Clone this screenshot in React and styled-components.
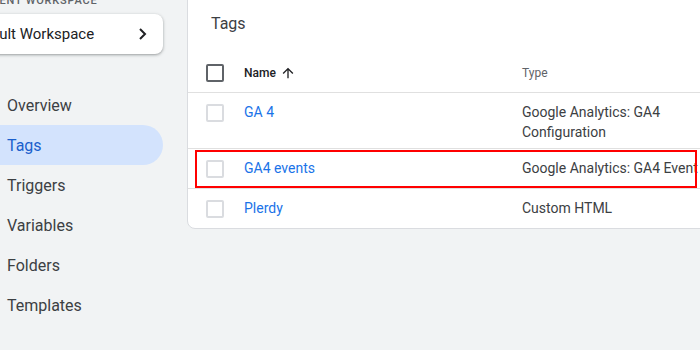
import React from "react";
import styled, { createGlobalStyle } from "styled-components";

const GlobalStyle = createGlobalStyle`
  html, body { margin: 0; padding: 0; }
  body {
    background: #f1f3f4;
    overflow: hidden;
    font-family: Roboto, "Liberation Sans", Arial, sans-serif;
    width: 700px;
    height: 350px;
  }
  * { box-sizing: border-box; }
`;

const Page = styled.div`
  display: flex;
  align-items: flex-start;
  margin: -14px 0 0 -48px;
  width: 820px;
`;

const Sidebar = styled.aside`
  width: 235px;
  flex-shrink: 0;
  display: flex;
  flex-direction: column;
`;

const WorkspaceLabel = styled.div`
  padding: 7px 0 0 16px;
  height: 23px;
  font-size: 11px;
  line-height: 16px;
  font-weight: 500;
  letter-spacing: 0.8px;
  color: #5f6368;
  text-transform: uppercase;
  white-space: nowrap;
`;

const WorkspaceCard = styled.button`
  margin: 5px 0 0 4px;
  width: 207px;
  height: 40px;
  display: flex;
  align-items: center;
  justify-content: space-between;
  padding: 0 13px 0 12px;
  background: #fff;
  border: none;
  border-radius: 8px;
  box-shadow: 0 1px 2px rgba(60, 64, 67, 0.3), 0 1px 3px 1px rgba(60, 64, 67, 0.15);
  font-family: inherit;
  font-size: 15px;
  color: #202124;
  cursor: pointer;
`;

const Nav = styled.nav`
  margin-top: 31px;
  display: flex;
  flex-direction: column;
`;

const NavItem = styled.a`
  display: flex;
  align-items: center;
  width: 211px;
  height: 40px;
  padding-left: 55px;
  border-radius: 0 20px 20px 0;
  font-size: 16px;
  font-weight: 400;
  color: ${(p) => (p.$active ? "#1a5fcc" : "#3c4043")};
  background: ${(p) => (p.$active ? "#d3e3fd" : "transparent")};
  text-decoration: none;
`;

const Main = styled.main`
  flex: 1;
`;

const Card = styled.section`
  width: 600px;
  background: #fff;
  border: 1px solid #dadce0;
  border-radius: 8px;
  overflow: hidden;
`;

const Title = styled.h2`
  margin: 0 0 18px;
  padding: 26px 0 0 23px;
  font-size: 16px;
  line-height: 22px;
  font-weight: 400;
  color: #3c4043;
`;

const Row = styled.div`
  position: relative;
  display: grid;
  grid-template-columns: 56px 278px 1fr;
  min-height: 39px;
  box-sizing: content-box;
  border-bottom: ${(p) => (p.$last ? "none" : "1px solid #e0e0e0")};
  align-items: ${(p) => (p.$header ? "center" : "start")};
`;

const BoxCell = styled.div`
  padding-left: 18px;
  padding-top: ${(p) => (p.$header ? "0" : "11px")};
  display: flex;
`;

const Checkbox = styled.span`
  display: block;
  width: 18px;
  height: 18px;
  border: 2px solid ${(p) => (p.$dark ? "#5f6368" : "#dadce0")};
  border-radius: 2px;
`;

const HeadCell = styled.div`
  display: flex;
  align-items: center;
  gap: 4px;
  font-size: 12px;
  font-weight: ${(p) => (p.$strong ? 500 : 400)};
  color: ${(p) => (p.$strong ? "#202124" : "#5f6368")};
`;

const Cell = styled.div`
  padding: 9px 0 6px;
  font-size: 14px;
  line-height: 20px;
  color: #3c4043;
  white-space: ${(p) => (p.$nowrap ? "nowrap" : "normal")};
  max-width: ${(p) => (p.$narrow ? "160px" : "none")};
`;

const LinkText = styled.a`
  color: #1a73e8;
  text-decoration: none;
`;

const Highlight = styled.div`
  position: absolute;
  top: 1px;
  left: 7px;
  width: 502px;
  height: 38px;
  border: 2px solid #ff0000;
  pointer-events: none;
`;

const Chevron = () => (
  <svg width="14" height="14" viewBox="0 0 14 14" aria-hidden="true">
    <polyline points="4,2 9,7 4,12" fill="none" stroke="#202124" strokeWidth="2" />
  </svg>
);

const ArrowUp = () => (
  <svg width="16" height="16" viewBox="0 0 24 24" aria-hidden="true">
    <path fill="#202124" d="M4 12l1.41 1.41L11 7.83V20h2V7.83l5.58 5.59L20 12l-8-8-8 8z" />
  </svg>
);

const navItems = ["Overview", "Tags", "Triggers", "Variables", "Folders", "Templates"];

const rows = [
  { name: "GA 4", type: "Google Analytics: GA4 Configuration", wrap: true },
  { name: "GA4 events", type: "Google Analytics: GA4 Event", highlight: true },
  { name: "Plerdy", type: "Custom HTML" },
];

export default function App() {
  return (
    <>
      <GlobalStyle />
      <Page>
        <Sidebar>
          <WorkspaceLabel>Current Workspace</WorkspaceLabel>
          <WorkspaceCard>
            <span>Default Workspace</span>
            <Chevron />
          </WorkspaceCard>
          <Nav>
            {navItems.map((n) => (
              <NavItem key={n} $active={n === "Tags"}>
                {n}
              </NavItem>
            ))}
          </Nav>
        </Sidebar>
        <Main>
          <Card>
            <Title>Tags</Title>
            <Row $header>
              <BoxCell $header>
                <Checkbox $dark />
              </BoxCell>
              <HeadCell $strong>
                Name
                <ArrowUp />
              </HeadCell>
              <HeadCell>Type</HeadCell>
            </Row>
            {rows.map((r, i) => (
              <Row key={r.name} $last={i === rows.length - 1}>
                <BoxCell>
                  <Checkbox />
                </BoxCell>
                <Cell>
                  <LinkText>{r.name}</LinkText>
                </Cell>
                <Cell $narrow={r.wrap} $nowrap={!r.wrap}>
                  {r.type}
                </Cell>
                {r.highlight && <Highlight />}
              </Row>
            ))}
          </Card>
        </Main>
      </Page>
    </>
  );
}
